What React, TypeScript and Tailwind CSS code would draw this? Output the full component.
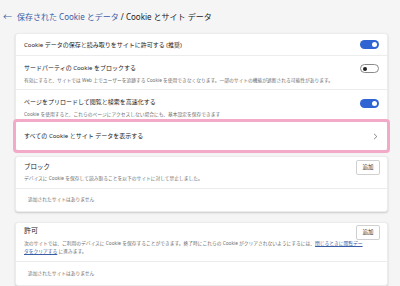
import React from 'react';

const FONT = "font-['Noto_Sans','Noto_Sans_CJK_JP',sans-serif]";

const Toggle = ({ on }: { on: boolean }) =>
  on ? (
    <div className="w-[19px] h-[9px] rounded-full bg-[#2f64d2] flex items-center justify-end pr-[2px] shrink-0">
      <div className="w-[5px] h-[5px] rounded-full bg-white" />
    </div>
  ) : (
    <div className="w-[19px] h-[9px] rounded-full bg-white border border-[#8a8a8a] flex items-center pl-[2px] shrink-0">
      <div className="w-[4px] h-[4px] rounded-full bg-[#222]" />
    </div>
  );

const Card = ({ children, className = '' }: { children: React.ReactNode; className?: string }) => (
  <div className={`bg-white rounded-[3px] border border-[#ececec] shadow-[0_1px_2px_rgba(0,0,0,0.18)] ${className}`}>
    {children}
  </div>
);

const AddButton = () => (
  <button className="w-[24px] h-[15px] border border-[#d0d0d0] rounded-[2px] bg-white text-[5.5px] text-[#333] flex items-center justify-center shrink-0">
    追加
  </button>
);

export default function App() {
  return (
    <div className={`w-[400px] h-[286px] overflow-hidden bg-[#f5f5f5] ${FONT} text-[#1b1b1b] pl-[15px] pr-[12px]`}>
      <div className="h-[33px] flex items-center -ml-[12px] gap-[5px]">
        <span className="text-[9px] text-[#44669e] leading-none">←</span>
        <h1 className="text-[8px] leading-none font-normal">
          <span className="text-[#3b5ca6]">保存された Cookie とデータ</span> / Cookie とサイト データ
        </h1>
      </div>

      <Card>
        <div className="h-[22px] flex items-center justify-between pl-[8px] pr-[8px] border-b border-[#ececec]">
          <span className="text-[6px] leading-[8px]">Cookie データの保存と読み取りをサイトに許可する (推奨)</span>
          <Toggle on />
        </div>
        <div className="flex justify-between pl-[8px] pr-[8px] pt-[8px] pb-[5px] border-b border-[#ececec]">
          <div className="flex flex-col gap-[4px]">
            <span className="text-[6px] leading-[8px]">サードパーティの Cookie をブロックする</span>
            <span className="text-[4.75px] leading-[8px] text-[#6b6b6b]">
              有効にすると、サイトでは Web 上でユーザーを追跡する Cookie を使用できなくなります。一部のサイトの機能が遮断される可能性があります。
            </span>
          </div>
          <Toggle on={false} />
        </div>
        <div className="flex justify-between items-start pl-[8px] pr-[8px] pt-[8px] pb-[3px] border-b border-[#ececec]">
          <div className="flex flex-col gap-[4px]">
            <span className="text-[6px] leading-[8px]">ページをプリロードして閲覧と検索を高速化する</span>
            <span className="text-[4.75px] leading-[8px] text-[#6b6b6b]">
              Cookie を使用すると、これらのページにアクセスしない場合にも、基本設定を保存できます
            </span>
          </div>
          <div className="pt-[1px]">
            <Toggle on />
          </div>
        </div>
        <div className="h-[28px] flex items-center justify-between pl-[8px] pr-[9px] outline-[3px] outline-solid outline-[#f3aac8] rounded-[1px]">
          <span className="text-[6px] leading-[8px]">すべての Cookie とサイト データを表示する</span>
          <svg width="5" height="7" viewBox="0 0 5 7" fill="none">
            <path d="M1 0.8 L3.8 3.5 L1 6.2" stroke="#555" strokeWidth="0.7" />
          </svg>
        </div>
      </Card>

      <Card className="mt-[5px]">
        <div className="flex justify-between items-start pl-[8px] pr-[7px] pt-[3px] pb-[6px] border-b border-[#ececec]">
          <div className="flex flex-col gap-[3px] pt-[3px]">
            <span className="text-[6.5px] leading-[8px]">ブロック</span>
            <span className="text-[4.75px] leading-[8px] text-[#6b6b6b]">
              デバイスに Cookie を保存して読み取ることを以下のサイトに対して禁止しました。
            </span>
          </div>
          <AddButton />
        </div>
        <div className="h-[22px] flex items-center pl-[12px] text-[4.75px] text-[#6b6b6b]">追加されたサイトはありません</div>
      </Card>

      <Card className="mt-[10px]">
        <div className="flex justify-between items-start pl-[8px] pr-[7px] pt-[2px] pb-[6px] border-b border-[#ececec]">
          <div className="flex flex-col gap-[4px] pt-[2px] min-w-0">
            <span className="text-[7px] leading-[8px]">許可</span>
            <div className="text-[4.75px] leading-[8px] text-[#6b6b6b] whitespace-nowrap">
              <div>
                次のサイトでは、ご利用のデバイスに Cookie を保存することができます。終了時にこれらの Cookie がクリアされないようにするには、
                <a className="text-[#3b5ca6] underline">閉じるときに閲覧デー</a>
              </div>
              <div>
                <a className="text-[#3b5ca6] underline">タをクリアする</a> に進みます。
              </div>
            </div>
          </div>
          <AddButton />
        </div>
        <div className="h-[23px] flex items-center pl-[12px] text-[4.75px] text-[#6b6b6b]">追加されたサイトはありません</div>
      </Card>
    </div>
  );
}
